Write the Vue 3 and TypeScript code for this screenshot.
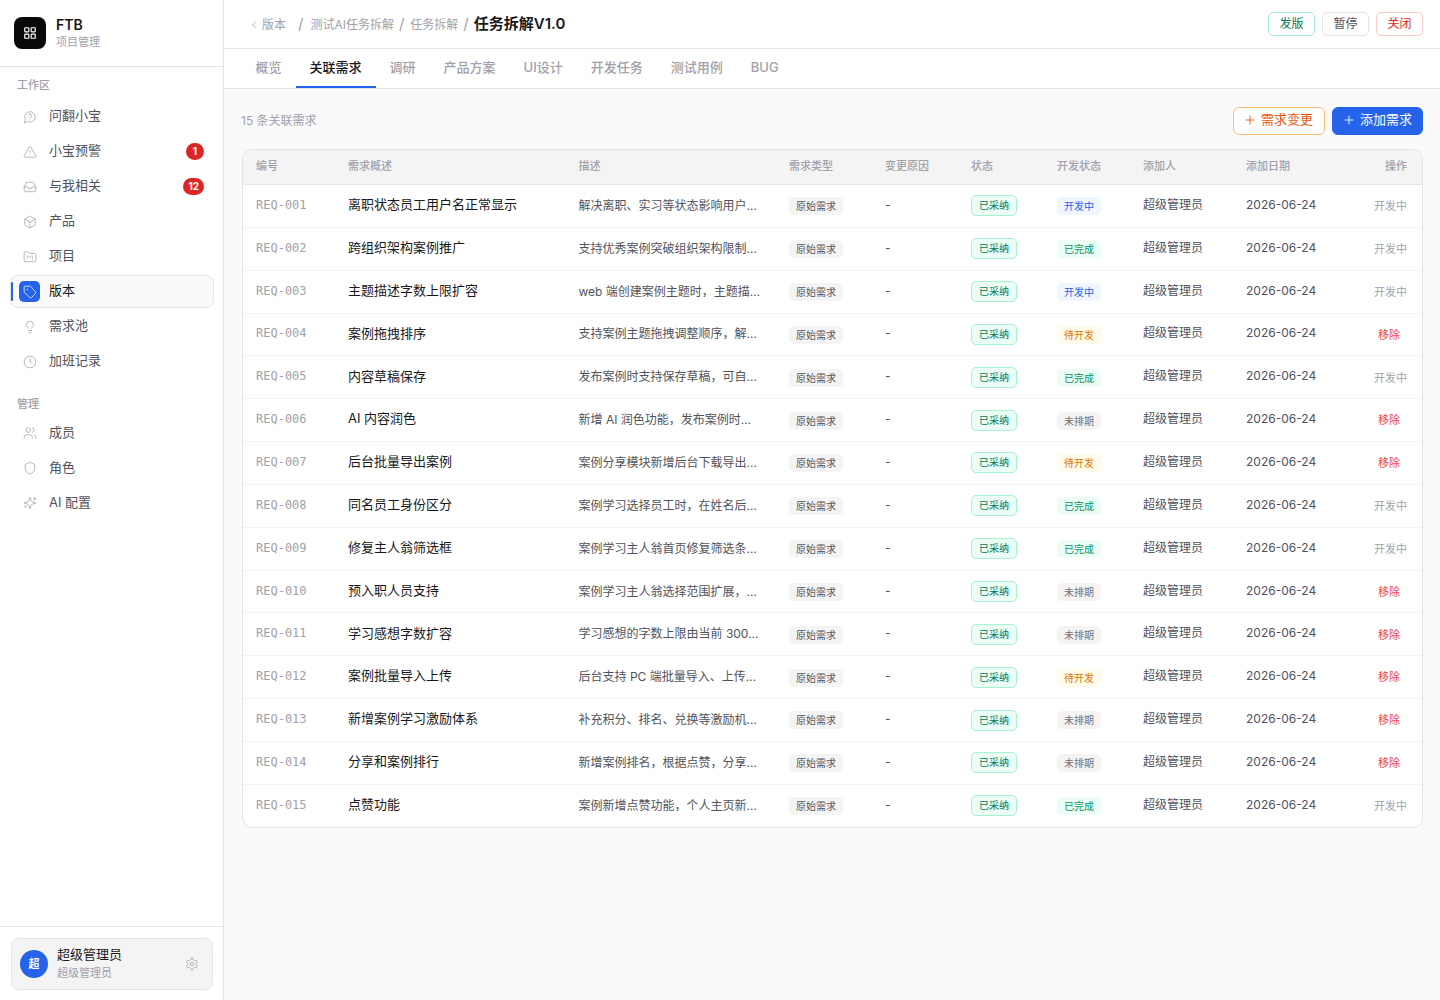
<script setup lang="ts">
const circle = (cx: number, cy: number, r: number) =>
  `M${cx - r} ${cy}a${r} ${r} 0 1 0 ${r * 2} 0a${r} ${r} 0 1 0 ${-r * 2} 0`

const icons: Record<string, string[]> = {
  grid: ['M4 3h5a1 1 0 0 1 1 1v5a1 1 0 0 1-1 1H4a1 1 0 0 1-1-1V4a1 1 0 0 1 1-1z', 'M15 3h5a1 1 0 0 1 1 1v5a1 1 0 0 1-1 1h-5a1 1 0 0 1-1-1V4a1 1 0 0 1 1-1z', 'M15 14h5a1 1 0 0 1 1 1v5a1 1 0 0 1-1 1h-5a1 1 0 0 1-1-1v-5a1 1 0 0 1 1-1z', 'M4 14h5a1 1 0 0 1 1 1v5a1 1 0 0 1-1 1H4a1 1 0 0 1-1-1v-5a1 1 0 0 1 1-1z'],
  question: ['M7.9 20A9 9 0 1 0 4 16.1L2 22Z', 'M9.09 9a3 3 0 0 1 5.83 1c0 2-3 3-3 3', 'M12 17h.01'],
  alert: ['m21.73 18-8-14a2 2 0 0 0-3.48 0l-8 14A2 2 0 0 0 4 21h16a2 2 0 0 0 1.73-3', 'M12 9v4', 'M12 17h.01'],
  inbox: ['M22 12h-6l-2 3h-4l-2-3H2', 'M5.45 5.11 2 12v6a2 2 0 0 0 2 2h16a2 2 0 0 0 2-2v-6l-3.45-6.89A2 2 0 0 0 16.76 4H7.24a2 2 0 0 0-1.79 1.11z'],
  box: ['M21 8a2 2 0 0 0-1-1.73l-7-4a2 2 0 0 0-2 0l-7 4A2 2 0 0 0 3 8v8a2 2 0 0 0 1 1.73l7 4a2 2 0 0 0 2 0l7-4A2 2 0 0 0 21 16Z', 'm3.3 7 8.7 5 8.7-5', 'M12 22V12'],
  folder: ['M4 20h16a2 2 0 0 0 2-2V8a2 2 0 0 0-2-2h-7.93a2 2 0 0 1-1.66-.9l-.82-1.2A2 2 0 0 0 7.93 3H4a2 2 0 0 0-2 2v13c0 1.1.9 2 2 2Z', 'M8 10v4', 'M12 10v2', 'M16 10v6'],
  tag: ['M12.586 2.586A2 2 0 0 0 11.172 2H4a2 2 0 0 0-2 2v7.172a2 2 0 0 0 .586 1.414l8.704 8.704a2.426 2.426 0 0 0 3.42 0l6.58-6.58a2.426 2.426 0 0 0 0-3.42z', circle(7.5, 7.5, 0.5)],
  bulb: ['M15 14c.2-1 .7-1.7 1.5-2.5 1-.9 1.5-2.2 1.5-3.5A6 6 0 0 0 6 8c0 1 .2 2.2 1.5 3.5.7.7 1.3 1.5 1.5 2.5', 'M9 18h6', 'M10 22h4'],
  clock: [circle(12, 12, 10), 'M12 6v6l4 2'],
  users: ['M16 21v-2a4 4 0 0 0-4-4H6a4 4 0 0 0-4 4v2', circle(9, 7, 4), 'M22 21v-2a4 4 0 0 0-3-3.87', 'M16 3.13a4 4 0 0 1 0 7.75'],
  shield: ['M20 13c0 5-3.5 7.5-7.66 8.95a1 1 0 0 1-.67-.01C7.5 20.5 4 18 4 13V6a1 1 0 0 1 1-1c2 0 4.5-1.2 6.24-2.72a1.17 1.17 0 0 1 1.52 0C14.51 3.81 17 5 19 5a1 1 0 0 1 1 1z'],
  sparkles: ['M9.937 15.5A2 2 0 0 0 8.5 14.063l-6.135-1.582a.5.5 0 0 1 0-.962L8.5 9.936A2 2 0 0 0 9.937 8.5l1.582-6.135a.5.5 0 0 1 .963 0L14.063 8.5A2 2 0 0 0 15.5 9.937l6.135 1.581a.5.5 0 0 1 0 .964L15.5 14.063a2 2 0 0 0-1.437 1.437l-1.582 6.135a.5.5 0 0 1-.963 0z', 'M20 3v4', 'M22 5h-4', 'M4 17v2', 'M5 18H3'],
  settings: ['M12.22 2h-.44a2 2 0 0 0-2 2v.18a2 2 0 0 1-1 1.73l-.43.25a2 2 0 0 1-2 0l-.15-.08a2 2 0 0 0-2.73.73l-.22.38a2 2 0 0 0 .73 2.73l.15.1a2 2 0 0 1 1 1.72v.51a2 2 0 0 1-1 1.74l-.15.09a2 2 0 0 0-.73 2.73l.22.38a2 2 0 0 0 2.73.73l.15-.08a2 2 0 0 1 2 0l.43.25a2 2 0 0 1 1 1.73V20a2 2 0 0 0 2 2h.44a2 2 0 0 0 2-2v-.18a2 2 0 0 1 1-1.73l.43-.25a2 2 0 0 1 2 0l.15.08a2 2 0 0 0 2.73-.73l.22-.39a2 2 0 0 0-.73-2.73l-.15-.08a2 2 0 0 1-1-1.74v-.5a2 2 0 0 1 1-1.74l.15-.09a2 2 0 0 0 .73-2.73l-.22-.38a2 2 0 0 0-2.73-.73l-.15.08a2 2 0 0 1-2 0l-.43-.25a2 2 0 0 1-1-1.73V4a2 2 0 0 0-2-2z', circle(12, 12, 3)],
  chevron: ['m15 18-6-6 6-6'],
  plus: ['M5 12h14', 'M12 5v14'],
}

const workspace = [
  { label: '问翻小宝', icon: 'question' },
  { label: '小宝预警', icon: 'alert', badge: '1' },
  { label: '与我相关', icon: 'inbox', badge: '12' },
  { label: '产品', icon: 'box' },
  { label: '项目', icon: 'folder' },
  { label: '版本', icon: 'tag', active: true },
  { label: '需求池', icon: 'bulb' },
  { label: '加班记录', icon: 'clock' },
]
const manage = [
  { label: '成员', icon: 'users' },
  { label: '角色', icon: 'shield' },
  { label: 'AI 配置', icon: 'sparkles' },
]
const tabs = ['概览', '关联需求', '调研', '产品方案', 'UI设计', '开发任务', '测试用例', 'BUG']
const columns = ['编号', '需求概述', '描述', '需求类型', '变更原因', '状态', '开发状态', '添加人', '添加日期', '操作']
const colWidths = [92, 230.5, 210.5, 96, 86, 86, 86, 103, 89, 100]

type Dev = 'doing' | 'done' | 'todo' | 'none'
const devLabel: Record<Dev, string> = { doing: '开发中', done: '已完成', todo: '待开发', none: '未排期' }

const rows: { title: string; desc: string; dev: Dev }[] = [
  { title: '离职状态员工用户名正常显示', desc: '解决离职、实习等状态影响用户…', dev: 'doing' },
  { title: '跨组织架构案例推广', desc: '支持优秀案例突破组织架构限制…', dev: 'done' },
  { title: '主题描述字数上限扩容', desc: 'web 端创建案例主题时，主题描…', dev: 'doing' },
  { title: '案例拖拽排序', desc: '支持案例主题拖拽调整顺序，解…', dev: 'todo' },
  { title: '内容草稿保存', desc: '发布案例时支持保存草稿，可自…', dev: 'done' },
  { title: 'AI 内容润色', desc: '新增 AI 润色功能，发布案例时…', dev: 'none' },
  { title: '后台批量导出案例', desc: '案例分享模块新增后台下载导出…', dev: 'todo' },
  { title: '同名员工身份区分', desc: '案例学习选择员工时，在姓名后…', dev: 'done' },
  { title: '修复主人翁筛选框', desc: '案例学习主人翁首页修复筛选条…', dev: 'done' },
  { title: '预入职人员支持', desc: '案例学习主人翁选择范围扩展，…', dev: 'none' },
  { title: '学习感想字数扩容', desc: '学习感想的字数上限由当前 300…', dev: 'none' },
  { title: '案例批量导入上传', desc: '后台支持 PC 端批量导入、上传…', dev: 'todo' },
  { title: '新增案例学习激励体系', desc: '补充积分、排名、兑换等激励机…', dev: 'none' },
  { title: '分享和案例排行', desc: '新增案例排名，根据点赞，分享…', dev: 'none' },
  { title: '点赞功能', desc: '案例新增点赞功能，个人主页新…', dev: 'done' },
]
const code = (i: number) => `REQ-${String(i + 1).padStart(3, '0')}`
</script>

<template>
  <div class="app">
    <aside class="sidebar">
      <div class="brand">
        <div class="logo">
          <svg class="ico logo-ico" viewBox="0 0 24 24"><path v-for="d in icons.grid" :key="d" :d="d" /></svg>
        </div>
        <div class="brand-text">
          <div class="brand-name">FTB</div>
          <div class="brand-sub">项目管理</div>
        </div>
      </div>
      <nav class="nav">
        <div class="nav-title">工作区</div>
        <div class="nav-list">
          <div v-for="item in workspace" :key="item.label" class="nav-item" :class="{ active: item.active }">
            <span class="nav-icon">
              <svg class="ico" viewBox="0 0 24 24"><path v-for="d in icons[item.icon]" :key="d" :d="d" /></svg>
            </span>
            <span class="nav-label">{{ item.label }}</span>
            <span v-if="item.badge" class="nav-badge">{{ item.badge }}</span>
          </div>
        </div>
        <div class="nav-title second">管理</div>
        <div class="nav-list">
          <div v-for="item in manage" :key="item.label" class="nav-item">
            <span class="nav-icon">
              <svg class="ico" viewBox="0 0 24 24"><path v-for="d in icons[item.icon]" :key="d" :d="d" /></svg>
            </span>
            <span class="nav-label">{{ item.label }}</span>
          </div>
        </div>
      </nav>
      <div class="side-foot">
        <div class="user-card">
          <div class="avatar">超</div>
          <div class="user-text">
            <div class="user-name">超级管理员</div>
            <div class="user-role">超级管理员</div>
          </div>
          <svg class="ico gear" viewBox="0 0 24 24"><path v-for="d in icons.settings" :key="d" :d="d" /></svg>
        </div>
      </div>
    </aside>

    <main class="main">
      <header class="topbar">
        <div class="crumbs">
          <svg class="ico back" viewBox="0 0 24 24"><path v-for="d in icons.chevron" :key="d" :d="d" /></svg>
          <span class="crumb first">版本</span>
          <span class="sep wide">/</span>
          <span class="crumb">测试AI任务拆解</span>
          <span class="sep one">/</span>
          <span class="crumb">任务拆解</span>
          <span class="sep">/</span>
          <span class="crumb-current">任务拆解V1.0</span>
        </div>
        <div class="top-actions">
          <button class="top-btn green">发版</button>
          <button class="top-btn plain">暂停</button>
          <button class="top-btn red">关闭</button>
        </div>
      </header>

      <div class="tabs">
        <div v-for="(t, i) in tabs" :key="t" class="tab" :class="{ current: i === 1 }">{{ t }}</div>
      </div>

      <section class="content">
        <div class="toolbar">
          <div class="count">15 条关联需求</div>
          <div class="tool-actions">
            <button class="act outline">
              <svg class="ico plus" viewBox="0 0 24 24"><path v-for="d in icons.plus" :key="d" :d="d" /></svg>需求变更
            </button>
            <button class="act solid">
              <svg class="ico plus" viewBox="0 0 24 24"><path v-for="d in icons.plus" :key="d" :d="d" /></svg>添加需求
            </button>
          </div>
        </div>

        <div class="table-card">
          <table class="table">
            <colgroup>
              <col v-for="(w, i) in colWidths" :key="i" :style="{ width: w + 'px' }" />
            </colgroup>
            <thead>
              <tr>
                <th v-for="(c, i) in columns" :key="c" :class="{ right: i === 9 }">{{ c }}</th>
              </tr>
            </thead>
            <tbody>
              <tr v-for="(r, i) in rows" :key="i">
                <td class="code">{{ code(i) }}</td>
                <td class="title">{{ r.title }}</td>
                <td class="desc">{{ r.desc }}</td>
                <td><span class="pill gray">原始需求</span></td>
                <td class="dash">-</td>
                <td><span class="status">已采纳</span></td>
                <td><span class="pill" :class="r.dev">{{ devLabel[r.dev] }}</span></td>
                <td class="adder">超级管理员</td>
                <td class="date">2026-06-24</td>
                <td class="right op">
                  <span v-if="r.dev === 'doing' || r.dev === 'done'" class="op-doing">开发中</span>
                  <span v-else class="op-remove">移除</span>
                </td>
              </tr>
            </tbody>
          </table>
        </div>
      </section>
    </main>
  </div>
</template>

<style>
html, body { margin: 0; background: #fff; }
</style>

<style scoped>
.app {
  display: flex;
  width: 1440px;
  height: 1000px;
  overflow: hidden;
  font-family: Inter, "Noto Sans CJK SC", sans-serif;
  line-height: 1.5;
  color: #18181b;
}
.ico {
  width: 14px;
  height: 14px;
  fill: none;
  stroke: currentColor;
  stroke-width: 1.5;
  stroke-linecap: round;
  stroke-linejoin: round;
  flex: none;
}
button { font-family: inherit; cursor: pointer; }

/* sidebar */
.sidebar {
  width: 224px;
  flex: none;
  box-sizing: border-box;
  border-right: 1px solid #e4e4e7;
  display: flex;
  flex-direction: column;
  background: #fff;
}
.brand {
  height: 67px;
  box-sizing: border-box;
  border-bottom: 1px solid #e4e4e7;
  display: flex;
  align-items: center;
  gap: 10px;
  padding: 0 14px;
}
.logo {
  width: 32px;
  height: 32px;
  border-radius: 8px;
  background: #09090b;
  color: #fff;
  display: flex;
  align-items: center;
  justify-content: center;
}
.logo-ico { width: 14px; height: 14px; stroke-width: 2; }
.brand-name { font-size: 14px; font-weight: 600; line-height: 18px; }
.brand-sub { font-size: 11px; line-height: 16px; color: #a1a1aa; }
.nav { flex: 1; padding: 11px 9px 0 10px; }
.nav-title {
  font-size: 11px;
  font-weight: 500;
  line-height: 14px;
  color: #a1a1aa;
  padding-left: 7px;
  margin-bottom: 8px;
}
.nav-title.second { margin-top: 19px; margin-bottom: 5px; }
.nav-list { display: flex; flex-direction: column; gap: 2px; }
.nav-item {
  position: relative;
  height: 33px;
  box-sizing: border-box;
  display: flex;
  align-items: center;
  padding: 0 9px 0 8px;
  border: 1px solid transparent;
  border-radius: 8px;
  font-size: 13px;
  color: #52525b;
}
.nav-icon {
  width: 21px;
  height: 21px;
  border-radius: 5px;
  display: flex;
  align-items: center;
  justify-content: center;
  color: #a1a1aa;
  margin-right: 9px;
  flex: none;
}
.nav-icon .ico { width: 14px; height: 14px; stroke-width: 1.3; }
.nav-label { flex: 1; padding-bottom: 2px; }
.nav-list:last-child .nav-label { padding-bottom: 0; }
.nav-item.active {
  background: #fafafa;
  border-color: #e4e4e7;
  color: #18181b;
}
.nav-item.active .nav-icon { background: #2563eb; color: #fff; }
.nav-item.active::before {
  content: "";
  position: absolute;
  left: 0;
  top: 6px;
  bottom: 6px;
  width: 1.5px;
  background: #2563eb;
  border-radius: 2px;
}
.nav-badge {
  min-width: 18px;
  box-sizing: border-box;
  height: 17px;
  padding: 0 5px;
  border-radius: 9px;
  background: #dc2626;
  color: #fff;
  font-size: 10px;
  font-weight: 700;
  line-height: 17px;
  text-align: center;
}
.side-foot {
  height: 74px;
  box-sizing: border-box;
  border-top: 1px solid #e4e4e7;
  padding: 11px 10px 0 11px;
}
.user-card {
  height: 52px;
  box-sizing: border-box;
  border: 1px solid #e4e4e7;
  border-radius: 8px;
  background: #f4f4f5;
  display: flex;
  align-items: center;
  padding: 0 13px 0 8px;
  gap: 9px;
}
.avatar {
  width: 28px;
  height: 28px;
  border-radius: 50%;
  background: #2563eb;
  color: #fff;
  font-size: 11px;
  font-weight: 600;
  display: flex;
  align-items: center;
  justify-content: center;
  flex: none;
}
.user-text { flex: 1; padding-bottom: 2px; }
.user-name { font-size: 13px; line-height: 18px; margin-bottom: 2px; color: #18181b; }
.user-role { font-size: 11px; line-height: 16px; color: #a1a1aa; }
.gear { width: 14px; height: 14px; color: #a1a1aa; stroke-width: 1.4; }

/* main */
.main { flex: 1; min-width: 0; display: flex; flex-direction: column; background: #fafafa; }
.topbar {
  height: 49px;
  box-sizing: border-box;
  flex: none;
  background: #fff;
  border-bottom: 1px solid #e4e4e7;
  display: flex;
  align-items: center;
  justify-content: space-between;
  padding: 0 17px 1px 24px;
}
.crumbs { display: flex; align-items: center; padding-top: 2px; font-size: 12px; color: #a1a1aa; }
.back { width: 12px; height: 12px; margin-right: 2px; color: #a1a1aa; stroke-width: 1.6; }
.sep { margin: 0 5px; font-size: 15px; color: #a1a1aa; }
.sep.wide { margin: 0 7px 0 12px; }
.sep.one { margin: 0 6px 0 5px; }
.crumb-current { font-size: 15px; font-weight: 600; color: #18181b; }
.top-actions { display: flex; gap: 7px; }
.top-btn {
  width: 47px;
  height: 24px;
  padding: 0;
  border-radius: 5px;
  background: #fff;
  font-size: 12px;
  line-height: 1;
}
.top-btn.green { border: 1px solid #a7f3d0; color: #047857; }
.top-btn.plain { border: 1px solid #e4e4e7; color: #52525b; }
.top-btn.red { border: 1px solid #fecaca; color: #dc2626; }

.tabs {
  height: 40px;
  box-sizing: border-box;
  flex: none;
  background: #fff;
  border-bottom: 1px solid #e4e4e7;
  display: flex;
  padding-left: 17.5px;
}
.tab {
  padding: 0 14px;
  font-size: 13px;
  line-height: 37px;
  font-weight: 500;
  color: #a1a1aa;
  height: 39px;
  box-sizing: border-box;
  border-bottom: 2px solid transparent;
}
.tab.current { color: #18181b; border-bottom-color: #2563eb; }

.content { flex: 1; padding: 18px 17px 0 18px; }
.toolbar {
  display: flex;
  align-items: center;
  justify-content: space-between;
  height: 28px;
  margin-bottom: 14px;
}
.count { font-size: 12px; color: #a1a1aa; margin-left: -1px; }
.tool-actions { display: flex; gap: 7px; }
.act {
  height: 28px;
  box-sizing: border-box;
  border-radius: 6px;
  display: flex;
  align-items: center;
  font-size: 13px;
  line-height: 1.5;
  padding: 0 0 2px 9px;
  gap: 4px;
  white-space: nowrap;
}
.plus { width: 14px; height: 14px; stroke-width: 1.5; }
.act.outline { width: 92px; background: #fff; border: 1px solid #fdba74; color: #ea580c; }
.act.solid { width: 91px; background: #2563eb; border: 1px solid #2563eb; color: #fff; }

.table-card {
  width: 1181px;
  box-sizing: border-box;
  border: 1px solid #e4e4e7;
  border-radius: 10px;
  background: #fff;
  overflow: hidden;
}
.table { width: 1179px; table-layout: fixed; border-collapse: collapse; }
th {
  height: 34.5px;
  box-sizing: border-box;
  padding: 0 13px 2px;
  background: #f4f4f5;
  border-bottom: 1px solid #e4e4e7;
  text-align: left;
  font-size: 11px;
  font-weight: 500;
  color: #a1a1aa;
}
td {
  height: 42.85px;
  box-sizing: border-box;
  padding: 0 13px;
  border-bottom: 1px solid #f4f4f5;
  font-size: 12px;
  color: #52525b;
  white-space: nowrap;
  overflow: hidden;
}
tbody tr:last-child td { border-bottom: none; }
th.right, td.right { text-align: right; padding-right: 15px; }
td.code, td.title, td.adder, td.date, td.dash { padding-bottom: 2px; }
.code {
  font-family: "DejaVu Sans Mono", monospace;
  font-size: 12px;
  color: #a1a1aa;
}
.title { font-size: 13px; color: #18181b; }
.desc { font-size: 12px; color: #52525b; }
.dash { color: #52525b; }
.pill {
  display: inline-block;
  height: 18px;
  line-height: 18px;
  border-radius: 5px;
  padding: 0 7px;
  font-size: 10px;
  vertical-align: middle;
}
.pill.gray { background: #f4f4f5; color: #52525b; }
.pill.doing { background: #eff6ff; color: #2563eb; }
.pill.done { background: #ecfdf5; color: #059669; }
.pill.todo { background: #fffbeb; color: #d97706; }
.pill.none { background: #f4f4f5; color: #71717a; }
.status {
  display: inline-block;
  box-sizing: border-box;
  height: 21px;
  line-height: 19px;
  padding: 0 7px;
  border: 1px solid #a7f3d0;
  border-radius: 5px;
  background: #ecfdf5;
  color: #047857;
  font-size: 10px;
  vertical-align: middle;
}
td.op { font-size: 11px; padding-top: 1px; }
.op-doing { color: #a1a1aa; }
.op-remove { color: #ef4444; margin-right: 7px; }
</style>
